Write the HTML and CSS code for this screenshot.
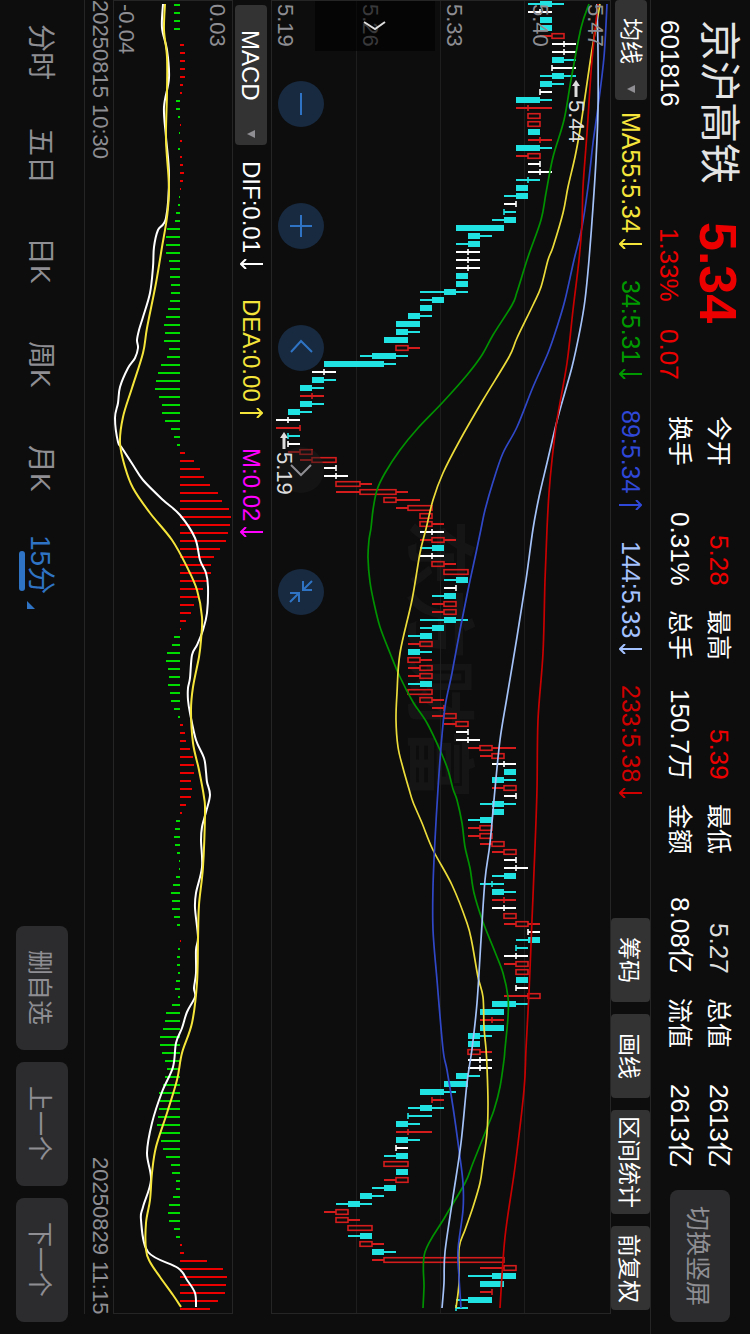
FILE: index.html
```html
<!DOCTYPE html>
<html lang="zh-CN">
<head>
    <meta charset="UTF-8">
    <meta name="viewport" content="width=device-width, initial-scale=1.0">
    <title>京沪高铁 601816</title>
    <link rel="stylesheet" href="styles.css">
</head>
<body>
    <div class="app">
        <!-- Quote header -->
        <header class="quote">
            <div class="quote-name">
                <h1>京沪高铁</h1>
                <p>601816</p>
            </div>
            <div class="quote-price">
                <strong>5.34</strong>
                <p><span>1.33%</span><span>0.07</span></p>
            </div>
            <dl class="stats">
                <div><dt>今开</dt><dd class="up">5.28</dd></div>
                <div><dt>最高</dt><dd class="up">5.39</dd></div>
                <div><dt>最低</dt><dd class="soft">5.27</dd></div>
                <div><dt>总值</dt><dd>2613亿</dd></div>
                <div><dt>换手</dt><dd>0.31%</dd></div>
                <div><dt>总手</dt><dd>150.7万</dd></div>
                <div><dt>金额</dt><dd>8.08亿</dd></div>
                <div><dt>流值</dt><dd>2613亿</dd></div>
            </dl>
            <button class="btn btn-rotate">切换竖屏</button>
        </header>

        <!-- Moving averages -->
        <div class="bar ma-bar">
            <div class="picker picker-ma">
                <select aria-label="主图指标"><option>均线</option></select>
                <svg width="8" height="8" viewBox="0 0 8 8"><path d="M0 4 8 0V8Z"/></svg>
            </div>
            <div class="legend">
                <span class="c-yellow">MA55:5.34<svg class="arrow" viewBox="0 0 23 10"><path d="M23 5H1M6 0 1 5l5 5"/></svg></span>
                <span class="c-green">34:5.31<svg class="arrow" viewBox="0 0 23 10"><path d="M23 5H1M6 0 1 5l5 5"/></svg></span>
                <span class="c-blue">89:5.34<svg class="arrow" viewBox="0 0 23 10"><path d="M0 5H22M17 0l5 5-5 5"/></svg></span>
                <span class="c-sky">144:5.33<svg class="arrow" viewBox="0 0 23 10"><path d="M23 5H1M6 0 1 5l5 5"/></svg></span>
                <span class="c-red">233:5.38<svg class="arrow" viewBox="0 0 23 10"><path d="M23 5H1M6 0 1 5l5 5"/></svg></span>
            </div>
            <div class="tools">
                <button>筹码</button>
                <button>画线</button>
                <button class="wide">区间统计</button>
                <button>前复权</button>
            </div>
        </div>

        <!-- Candles -->
        <section class="chart main-chart">
            <span class="watermark">东方财富</span>
            <svg class="plot" id="kline" viewBox="272 1 338 1312" preserveAspectRatio="none"></svg>
            <div class="scale">
                <span>5.47</span><span>5.40</span><span>5.33</span><span>5.26</span><span>5.19</span>
            </div>
            <span class="mark mark-high"><svg width="8" height="17" viewBox="0 0 8 17"><path d="M4 0 8 6H5.5V17H2.5V6H0Z"/></svg>5.44</span>
            <button class="drawer" aria-label="展开">
                <svg width="24" height="12" viewBox="0 0 24 12"><path d="M1 2 12 9 22 2"/></svg>
            </button>
            <div class="zoom-tools">
                <button aria-label="缩小"><svg viewBox="0 0 46 46"><path d="M23 12V34"/></svg></button>
                <button aria-label="放大"><svg viewBox="0 0 46 46"><path d="M23 12V34M12 23H34"/></svg></button>
                <button aria-label="前移"><svg viewBox="0 0 46 46"><path d="M13 27 23 16 34 27"/></svg></button>
                <button aria-label="后移" class="off"><svg viewBox="0 0 46 46"><path d="M13 18 23 28 33 18"/></svg></button>
                <button aria-label="收起"><svg viewBox="0 0 46 46"><path d="M34 12 25 21M25 12v9h9M12 33l9-9M12 24h9v9"/></svg></button>
            </div>
            <span class="mark mark-low"><svg width="8" height="17" viewBox="0 0 8 17"><path d="M4 0 8 6H5.5V17H2.5V6H0Z"/></svg>5.19</span>
        </section>

        <!-- MACD -->
        <div class="bar macd-bar">
            <div class="picker picker-macd">
                <select aria-label="副图指标"><option>MACD</option></select>
                <svg width="8" height="8" viewBox="0 0 8 8"><path d="M0 4 8 0V8Z"/></svg>
            </div>
            <div class="legend">
                <span>DIF:0.01<svg class="arrow" viewBox="0 0 23 10"><path d="M23 5H1M6 0 1 5l5 5"/></svg></span>
                <span class="c-yellow">DEA:0.00<svg class="arrow" viewBox="0 0 23 10"><path d="M0 5H22M17 0l5 5-5 5"/></svg></span>
                <span class="c-pink">M:0.02<svg class="arrow" viewBox="0 0 23 10"><path d="M23 5H1M6 0 1 5l5 5"/></svg></span>
            </div>
        </div>
        <section class="chart macd-chart">
            <svg class="plot" id="macd" viewBox="114 1 118 1312" preserveAspectRatio="none"></svg>
            <div class="scale">
                <span>0.03</span><span>-0.04</span>
            </div>
        </section>
        <div class="dates">
            <time>20250815 10:30</time>
            <time>20250829 11:15</time>
        </div>

        <!-- Periods -->
        <footer class="footer">
            <nav class="tabs">
                <a href="#">分时</a>
                <a href="#">五日</a>
                <a href="#">日K</a>
                <a href="#">周K</a>
                <a href="#">月K</a>
                <a href="#" class="active"><span>15分</span><svg width="8" height="8" viewBox="0 0 8 8"><path d="M0 0V8H8Z"/></svg></a>
            </nav>
            <div class="actions">
                <button class="btn">删自选</button>
                <button class="btn">上一个</button>
                <button class="btn">下一个</button>
            </div>
        </footer>
    </div>
    <script src="chart.js"></script>
</body>
</html>
```
FILE: styles.css
```css
:root {
    --bg: #0d0d0d;
    --line: #252525;
    --muted: #8e8e93;
    --red: #ec0000;
    --yellow: #f5e53b;
    --green: #009a00;
    --accent: #2f74c4;
}

* {
    box-sizing: border-box;
    margin: 0;
    padding: 0;
}

/* the whole screen is a landscape layout turned clockwise */
html {
    writing-mode: vertical-rl;
    text-orientation: sideways;
    height: 100%;
    background: var(--bg);
}

body {
    width: 100vw;
    height: 100vh;
    overflow: hidden;
    color: #fff;
    font-family: "Liberation Sans", "Noto Sans CJK SC", sans-serif;
    font-size: 26px;
}

button,
select {
    writing-mode: vertical-rl;
    text-orientation: sideways;
    font: inherit;
    color: inherit;
    border: none;
    background: none;
    cursor: pointer;
}

.app {
    display: flex;
    flex-direction: column;
    width: 100%;
    height: 100%;
}

/* header */
.quote {
    display: grid;
    grid-template-columns: 180px 172px 1fr 132px;
    column-gap: 22px;
    block-size: 99px;
    padding-inline: 20px 12px;
}

.quote-name h1 {
    font-size: 41px;
    font-weight: 400;
    line-height: 62px;
    color: #e4e4e4;
    white-space: nowrap;
}

.quote-name p {
    line-height: 37px;
}

.quote-price {
    color: var(--red);
}

.quote-price strong {
    display: block;
    font-size: 52px;
    line-height: 64px;
}

.quote-price p {
    display: flex;
    gap: 27px;
    padding-inline-start: 6px;
    line-height: 34px;
}

.stats {
    display: grid;
    grid-template-columns: repeat(4, 1fr);
    column-gap: 24px;
    align-content: start;
    padding-block-start: 12px;
    line-height: 39px;
    white-space: nowrap;
}

.stats div {
    display: flex;
    justify-content: space-between;
}

.stats dt {
    font-size: 25px;
}

.stats .up {
    color: var(--red);
}

.stats .soft {
    color: #ddd;
}

.btn {
    block-size: 52px;
    inline-size: 124px;
    border-radius: 8px;
    background: #2c2c2e;
    color: var(--muted);
    font-size: 25px;
}

.btn-rotate {
    block-size: 60px;
    inline-size: 132px;
    margin-block-start: 20px;
}

/* indicator bars */
.bar {
    display: flex;
    align-items: center;
}

.ma-bar {
    block-size: 40px;
    border-block-start: 1px solid var(--line);
    padding-inline-end: 24px;
    font-size: 25px;
}

.macd-bar {
    block-size: 38px;
    padding-block-start: 2px;
    padding-inline-start: 5px;
    font-size: 24px;
}

.picker {
    position: relative;
    block-size: 32px;
}

.picker-ma {
    inline-size: 100px;
}

.picker-macd {
    inline-size: 140px;
}

.picker select {
    appearance: none;
    block-size: 100%;
    inline-size: 100%;
    padding-inline-start: 18px;
    padding-block-start: 3px;
    border-radius: 4px;
    background: #333;
    font-size: 23px;
}

.picker-macd select {
    padding-inline-start: 25px;
    font-size: 24px;
}

.picker svg {
    position: absolute;
    inset-inline-end: 7px;
    inset-block: 12px;
    fill: var(--muted);
    pointer-events: none;
}

.legend {
    display: flex;
    gap: 31px;
    padding-inline-start: 12px;
    white-space: nowrap;
}

.macd-bar .legend {
    gap: 30px;
    padding-inline-start: 16px;
}

.legend span {
    display: flex;
    align-items: center;
    gap: 6px;
}

.arrow {
    width: 23px;
    height: 10px;
    fill: none;
    stroke: currentColor;
    stroke-width: 2;
}

.tools {
    display: flex;
    gap: 12px;
    margin-inline-start: auto;
    block-size: 39px;
}

.tools button {
    inline-size: 84px;
    border-radius: 4px;
    background: #333;
    font-size: 23px;
    white-space: nowrap;
}

.tools .wide {
    inline-size: 104px;
}

.c-yellow { color: var(--yellow); }
.c-green { color: var(--green); }
.c-blue { color: #3048d8; }
.c-sky { color: #a4c2ff; }
.c-red { color: #d00000; }
.c-pink { color: #f0f; }

/* charts */
.chart {
    position: relative;
    margin-inline-end: 20px;
    border: 1px solid var(--line);
}

.main-chart {
    flex: 338 1 0;
}

.macd-chart {
    flex: 118 1 0;
}

.plot {
    position: absolute;
    inset: 0;
    width: 100%;
    height: 100%;
}

.scale {
    position: absolute;
    inset: 0;
    display: flex;
    flex-direction: column;
    justify-content: space-between;
    padding-inline-start: 3px;
    padding-block: 3px 0;
    font-size: 22px;
    line-height: 24px;
    color: var(--muted);
    pointer-events: none;
}

.main-chart .scale {
    display: grid;
    grid-template-rows: 55px 86px 84px 85px 1fr;
    align-items: start;
}

.watermark {
    position: absolute;
    top: 518px;
    left: 128px;
    font-size: 70px;
    font-weight: 700;
    line-height: 76px;
    color: #151515;
    white-space: nowrap;
}

.mark {
    position: absolute;
    display: flex;
    align-items: center;
    gap: 3px;
    font-size: 22px;
    line-height: 20px;
    color: #ddd;
}

.mark svg {
    fill: currentColor;
}

.mark-high {
    top: 79px;
    left: 294px;
}

.mark-low {
    top: 431px;
    left: 2px;
}

.drawer {
    position: absolute;
    top: 0;
    left: 43px;
    width: 120px;
    height: 50px;
    background: rgba(0, 0, 0, 0.6);
}

.drawer svg {
    display: block;
    margin: auto;
    fill: none;
    stroke: #ddd;
    stroke-width: 2;
}

.zoom-tools {
    position: absolute;
    top: 80px;
    left: 6px;
    display: flex;
    gap: 76px;
}

.zoom-tools button {
    width: 46px;
    height: 46px;
    border-radius: 50%;
    background: #182a40;
    color: var(--accent);
}

.zoom-tools .off {
    background: rgba(28, 28, 28, 0.5);
    color: var(--muted);
}

.zoom-tools svg {
    display: block;
    width: 46px;
    height: 46px;
    fill: none;
    stroke: currentColor;
    stroke-width: 2;
}

.dates {
    display: flex;
    justify-content: space-between;
    block-size: 28px;
    padding-inline: 0 20px;
    font-size: 22px;
    line-height: 26px;
    color: var(--muted);
}

/* footer */
.footer {
    display: flex;
    align-items: center;
    justify-content: space-between;
    block-size: 85px;
    padding-block-start: 2px;
    padding-inline-end: 12px;
    background: linear-gradient(var(--line), var(--line)) right top / 1px calc(100% - 20px) no-repeat;
}

.tabs {
    display: grid;
    grid-template-columns: repeat(6, 104px);
}

.tabs a {
    display: flex;
    justify-content: center;
    gap: 6px;
    font-size: 28px;
    line-height: 44px;
    padding-block-start: 4px;
    color: var(--muted);
    text-decoration: none;
    white-space: nowrap;
}

.tabs .active {
    align-items: center;
    color: var(--accent);
}

.tabs span {
    position: relative;
}

.tabs span::after {
    content: "";
    position: absolute;
    inset-block-end: 1px;
    inset-inline: 16px 4px;
    block-size: 6px;
    border-radius: 3px;
    background: var(--accent);
}

.tabs svg {
    align-self: flex-end;
    margin-block-end: 9px;
    fill: var(--accent);
}

.actions {
    display: flex;
    gap: 12px;
}
```
FILE: chart.js
```javascript
const NS = 'http://www.w3.org/2000/svg';
const STEP = 8;

// kind, low, body from, body to, high (cents above 5.19)
const candles = `
c21,22,23,24 w21,22,22,23 c22,22,23,23 c22,22,23,23 r22,23,24,24 w23,24,24,25 w23,24,24,25 c23,23,24,25
w23,23,23,25 c22,23,24,25 c22,22,23,24 w22,22,22,23 c20,20,22,23 r20,21,21,23 r21,21,22,22 r21,21,22,22
c21,21,22,22 r21,22,22,23 c20,20,22,23 r20,21,22,22 w21,22,22,22 w21,22,22,23 c20,21,21,22 c20,20,21,21
c19,20,21,21 w19,20,20,20 c19,19,19,20 c18,19,20,20 c15,15,19,19 c16,16,17,18 c15,16,17,17 w15,16,16,17
w15,16,16,17 w15,16,16,17 c15,15,16,16 c15,15,16,16 c12,14,15,16 c12,13,14,14 c12,12,13,13 c11,11,12,13
c10,10,12,12 c10,10,11,12 c9,9,11,11 r10,10,11,12 c7,8,10,11 c4,4,9,10 w3,4,4,5 c3,3,4,5
c2,2,3,4 r2,3,3,4 c2,2,3,4 c1,1,2,3 w0,1,1,2 r0,2,2,2 c1,1,1,2 w1,1,1,2
r1,2,3,3 r2,3,5,5 w4,5,5,5 w4,5,5,6 r5,5,7,8 r5,7,10,11 r9,9,10,12 r10,11,13,13
r12,12,13,13 r12,12,13,14 w12,13,13,14 r12,13,14,15 c12,13,14,14 w12,13,13,14 r13,13,14,15 r14,14,16,16
c14,15,16,16 w14,15,15,15 c13,14,15,15 r13,14,15,15 r13,14,15,15 c12,14,15,16 c12,13,14,14 c11,12,13,13
r11,12,13,13 c11,11,12,13 r11,11,12,13 r11,12,13,13 r11,12,13,13 c11,12,13,13 r11,11,13,13 r12,12,13,14
r13,14,14,14 r13,14,15,15 r14,15,16,16 w15,16,16,16 w15,16,16,17 r16,17,18,20 r17,18,19,19 w18,19,19,20
c19,19,20,20 c18,18,19,20 r18,19,20,20 w19,20,20,20 c17,18,19,20 c18,18,19,19 c16,17,18,18 r16,17,18,18
r16,17,18,18 r17,18,19,19 r18,19,20,20 w19,20,20,20 w19,20,20,21 c18,19,20,20 c17,18,18,19 c18,18,19,20
r18,19,19,20 w18,19,19,20 r19,19,20,20 r19,20,21,22 w21,21,21,22 c20,21,22,22 c20,20,20,21 w19,20,20,21
r19,20,21,21 r20,20,21,21 c20,20,21,21 w20,20,20,21 r19,21,22,22 c18,18,20,21 c17,17,19,19 r17,18,18,19
c17,17,19,19 c16,16,17,18 c16,16,17,17 r16,16,17,18 w16,17,17,18 w16,17,17,18 c15,15,16,17 c14,14,16,16
c12,12,14,15 r13,13,13,14 c11,12,13,14 c11,11,11,13 c10,10,11,12 r10,11,11,13 c10,10,11,12 w10,10,10,11
c9,10,11,11 r9,9,11,11 c10,10,11,11 r9,10,11,11 c8,9,10,10 c7,7,8,9 c5,6,7,8 r4,5,6,6
r5,5,6,7 r6,6,8,8 c6,7,8,8 r7,7,8,9 c8,8,9,10 r8,9,19,19 r17,19,20,20 c16,18,20,20
c17,17,19,19 r17,18,18,18 c15,16,18,18 c15,15,15,16`.trim().split(/\s+/);

const bars = [
    -6, -6, -6, -6, 0, 4, 5, 5, 5, 5, 3, 2, -4, -4, -2, 1, -1, 2, -2, 2,
    3, 4, 3, 1, -1, -2, -4, -5, -13, -14, -14, -14, -11, -10, -10, -9, -9, -10, -12, -14,
    -16, -15, -16, -11, -13, -19, -22, -24, -25, -21, -18, -18, -15, -9, -6, -3, 5, 14, 20, 24,
    30, 38, 42, 49, 51, 50, 48, 46, 40, 34, 31, 31, 27, 23, 18, 14, 11, 6, 1, -6,
    -8, -13, -14, -12, -11, -12, -10, -9, -6, -2, 3, 5, 6, 10, 13, 14, 14, 11, 12, 11,
    6, 2, -4, -5, -6, -5, -3, -1, -1, -4, -7, -9, -8, -8, -6, -3, 0, 1, -2, -3,
    -3, -2, -4, -5, -2, -8, -14, -15, -17, -20, -20, -18, -15, -13, -15, -17, -21, -20, -21, -22,
    -23, -20, -19, -17, -14, -9, -8, -4, -4, -7, -11, -12, -11, -6, -4, 2, 4, 27, 43, 47,
    46, 45, 38, 30
];

const averages = [
    { color: '#009200', points: '589,4 581,28 571,80 564,120 553,157 546,193 541,220 528,257 517,292 512,305 493,335 482,355 467,375 443,402 418,428 400,450 385,473 377,490 373,510 371,528 369,540 368,558 370,582 374,603 380,627 390,653 400,677 413,702 427,723 440,750 448,770 453,789 457,800 462,823 465,847 470,868 474,893 483,922 495,952 503,973 508,997 508,1017 505,1049 504,1060 500,1087 494,1110 487,1128 473,1163 465,1183 445,1217 425,1252 424,1287 423,1308' },
    { color: '#ecdc3a', points: '600,4 592,50 585,97 580,130 575,157 568,187 563,213 553,247 548,260 541,287 533,305 517,338 509,357 483,400 460,440 443,473 433,500 426,529 420,553 412,600 400,653 397,693 396,720 398,747 403,768 409,789 413,802 422,823 433,850 452,885 467,923 472,943 478,977 483,997 484,1027 486,1049 487,1067 488,1103 487,1133 483,1163 480,1183 473,1207 465,1230 459,1248 459,1283 456,1308' },
    { color: '#3048c8', points: '607,4 604,57 598,107 593,143 588,187 582,227 574,260 565,300 557,327 548,353 533,387 517,427 503,453 493,482 485,510 481,529 476,553 468,590 460,630 452,673 445,707 441,747 438,789 435,840 433,887 433,930 437,980 443,1049 447,1070 453,1107 459,1150 463,1183 463,1210 458,1250 459,1277 461,1308' },
    { color: '#a4c2f8', points: '597,4 598,50 598,110 596,160 593,207 589,260 585,300 580,330 572,367 558,417 547,463 539,497 533,529 526,580 517,637 507,697 500,740 495,789 490,843 485,880 481,940 477,1003 472,1049 467,1083 461,1143 453,1197 445,1252 444,1283 442,1308' },
    { color: '#c80000', points: '598,4 592,60 587,133 583,187 582,223 579,260 573,310 567,363 557,420 552,460 549,493 547,529 545,580 543,653 538,720 537,789 535,847 532,920 529,993 526,1049 524,1090 515,1167 505,1237 500,1308' }
];

const dif = '163,4 162,28 167,50 169,78 164,107 166,137 169,175 166,218 158,230 154,247 153,267 150,293 143,317 139,330 137,340 138,348 135,358 128,368 120,387 118,403 115,418 118,442 122,448 133,465 143,480 163,500 180,515 195,538 200,560 206,573 208,587 207,613 203,630 197,645 192,655 190,678 188,688 188,700 190,713 196,740 204,758 206,772 207,782 210,795 206,812 202,827 201,840 202,867 196,893 195,908 198,937 196,950 196,973 194,988 195,997 187,1012 182,1028 176,1043 173,1067 162,1092 152,1123 147,1153 151,1180 143,1207 141,1220 148,1252 178,1268 187,1280 195,1293 196,1307';
const dea = '165,4 164,30 167,57 167,93 166,140 169,187 167,217 162,247 156,283 147,328 143,353 132,388 123,417 120,443 125,467 133,488 150,513 172,540 187,567 197,590 202,617 201,640 199,657 193,687 191,710 193,743 199,770 204,797 205,813 203,867 199,905 198,940 197,983 192,1023 182,1053 177,1080 167,1113 156,1147 152,1173 150,1200 146,1223 146,1250 150,1262 160,1277 173,1295 181,1307';

function add(parent, tag, attrs) {
    const el = document.createElementNS(NS, tag);
    for (const key in attrs) {
        el.setAttribute(key, attrs[key]);
    }
    parent.appendChild(el);
}

function rect(parent, x, y, width, height, fill) {
    add(parent, 'rect', { x, y, width, height, fill });
}

// Catmull-Rom through all points
function curve(parent, text, color, width) {
    const p = text.split(' ').map(s => s.split(',').map(Number));
    let d = `M${p[0]}`;
    for (let i = 0; i < p.length - 1; i++) {
        const a = p[i - 1] || p[i];
        const b = p[i];
        const c = p[i + 1];
        const e = p[i + 2] || c;
        d += `C${b[0] + (c[0] - a[0]) / 6} ${b[1] + (c[1] - a[1]) / 6} ${c[0] - (e[0] - b[0]) / 6} ${c[1] - (e[1] - b[1]) / 6} ${c}`;
    }
    add(parent, 'path', { d, fill: 'none', stroke: color, 'stroke-width': width });
}

function drawCandles() {
    const svg = document.getElementById('kline');
    const colors = { c: '#20e2e2', r: '#d41c1c', w: '#ffffff' };
    const px = n => 276 + n * 12;

    [357, 441, 525].forEach(x => rect(svg, x - 1, 1, 1, 1312, '#1e1e1e'));

    candles.forEach((item, i) => {
        const color = colors[item[0]];
        const [low, from, to, high] = item.slice(1).split(',').map(Number);
        const y = 4 + i * STEP;
        const wick = (a, b) => b > a && rect(svg, px(a), y - 1, px(b) - px(a), 2, color);

        wick(low, from);
        wick(to, high);
        if (from === to) {
            rect(svg, px(from) - 0.8, y - 3, 1.6, 6, color);
        } else if (item[0] === 'r') {
            add(svg, 'rect', { x: px(from), y: y - 2.3, width: px(to) - px(from), height: 4.6, fill: 'none', stroke: color, 'stroke-width': 1.6 });
        } else {
            rect(svg, px(from), y - 3, px(to) - px(from), 6, color);
        }
    });

    averages.forEach(line => curve(svg, line.points, line.color, 1.7));
}

function drawMacd() {
    const svg = document.getElementById('macd');
    const zero = 180;

    bars.forEach((v, i) => {
        const color = v > 0 ? '#ec0000' : '#00dc00';
        rect(svg, Math.min(zero, zero + v), 4 + i * STEP, Math.abs(v), 2, color);
    });
    curve(svg, dif, '#ffffff', 2);
    curve(svg, dea, '#f5e53b', 2);
}

drawCandles();
drawMacd();
```
